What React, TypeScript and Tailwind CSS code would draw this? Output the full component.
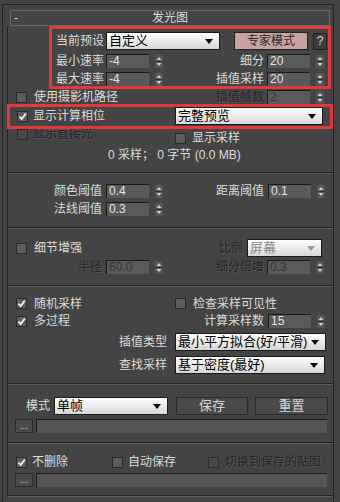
import React from "react";

const font = "font-['Liberation_Sans','Noto_Sans_CJK_SC',sans-serif]";
const dim = "text-[#262626] [text-shadow:1px_1px_0_#575757]";

function Arrows() {
  return (
    <svg width="8" height="13" viewBox="0 0 8 13" className="ml-[6px] shrink-0">
      <rect x="0" y="0" width="8" height="13" fill="#555" />
      <polygon points="1.5,5 4,2 6.5,5" fill="#d0d0d0" />
      <line x1="0.5" y1="6.5" x2="7.5" y2="6.5" stroke="#333" />
      <polygon points="1.5,8 4,11 6.5,8" fill="#d0d0d0" />
    </svg>
  );
}

function Spin({ value, disabled }: { value: string; disabled?: boolean }) {
  return (
    <div className="flex items-center shrink-0">
      <div
        className={`w-[43px] h-[14px] bg-[#5a5a5a] border-t border-l border-[#1a1a1a] pl-[2px] text-[12px] leading-[13px] ${
          disabled ? "text-[#363636]" : "text-[#e4e4e4]"
        }`}
      >
        {value}
      </div>
      <Arrows />
    </div>
  );
}

function Check({ checked, disabled }: { checked?: boolean; disabled?: boolean }) {
  return (
    <div
      className={`w-[11px] h-[11px] shrink-0 border border-[#2a2a2a] flex items-center justify-center ${
        disabled ? "bg-[#484848]" : "bg-[#5c5c5c]"
      }`}
    >
      {checked && (
        <svg width="9" height="9" viewBox="0 0 9 9">
          <polyline points="1.5,4.5 3.6,7 7.8,1.6" fill="none" stroke="#f2f2f2" strokeWidth="1.8" />
        </svg>
      )}
    </div>
  );
}

function Select({ value, className, disabled }: { value: string; className: string; disabled?: boolean }) {
  return (
    <div
      className={`h-[18px] shrink-0 flex items-center justify-between border border-[#1a1a1a] bg-gradient-to-b from-white to-[#d6d6d6] pl-[2px] pr-[6px] text-[13px] leading-[16px] ${
        disabled ? "text-[#8a8a8a]" : "text-black"
      } ${className}`}
    >
      <span>{value}</span>
      <svg width="8" height="5" viewBox="0 0 8 5">
        <polygon points="0,0 8,0 4,5" fill={disabled ? "#9a9a9a" : "#000"} />
      </svg>
    </div>
  );
}

function Btn({ children, className }: { children: React.ReactNode; className: string }) {
  return (
    <div
      className={`h-[18px] shrink-0 flex items-center justify-center border border-[#2a2a2a] bg-[#4a4a4a] text-[13px] text-[#d4d4d4] ${className}`}
    >
      {children}
    </div>
  );
}

function Sep() {
  return <div className="h-[2px] border-t border-[#222] border-b border-b-[#5c5c5c]" />;
}

function PathRow({ className }: { className: string }) {
  return (
    <div className={`flex items-center pl-[7px] ${className}`}>
      <div className="w-[18px] h-[14px] border border-[#2a2a2a] bg-[#4a4a4a] flex items-end justify-center text-[10px] leading-[10px] text-[#cfcfcf] pb-[1px]">
        ...
      </div>
      <div className="ml-[3px] w-[291px] h-[14px] bg-[#555] border-t border-l border-[#1a1a1a]" />
    </div>
  );
}

export default function App() {
  return (
    <div className={`relative w-[340px] h-[502px] overflow-hidden bg-[#444] pt-[4px] pl-[2px] text-[12px] text-[#dcdcdc] ${font}`}>
      <div className="w-[332px] h-full border-l border-t border-r border-[#222]">
        {/* rollout header */}
        <div className="ml-[7px] mt-[5px] w-[320px] h-[16px] border border-[#666] flex items-center relative">
          <span className="absolute left-[3px] top-[0px] text-[12px] leading-[14px]">-</span>
          <div className="w-full text-center text-[12px] leading-[14px]">发光图</div>
        </div>

        <div className="ml-[4px] border-l border-[#222]">
          {/* section 1 */}
          <div className="pt-[6px] pb-[10px]">
            <div className="flex items-center h-[18px]">
              <div className="w-[98px] pr-[2px] text-right">当前预设</div>
              <Select value="自定义" className="w-[114px]" />
              <div className="ml-[14px] w-[74px] h-[18px] flex items-center justify-center border border-[#222] bg-[#c9a3a3] text-[#2e2626]">
                专家模式
              </div>
              <div className="ml-[5px] w-[14px] h-[17px] flex items-center justify-center border border-[#222] bg-[#3e3e3e] text-[#d8d8d8]">
                ?
              </div>
            </div>
            <div className="flex items-center h-[18px] mt-[2px]">
              <div className="w-[98px] pr-[2px] text-right">最小速率</div>
              <Spin value="-4" />
              <div className="w-[104px] pr-[3px] text-right">细分</div>
              <Spin value="20" />
            </div>
            <div className="flex items-center h-[18px]">
              <div className="w-[98px] pr-[2px] text-right">最大速率</div>
              <Spin value="-4" />
              <div className="w-[104px] pr-[3px] text-right">插值采样</div>
              <Spin value="20" />
            </div>
            <div className="flex items-center h-[18px]">
              <div className="w-[155px] pl-[8px] flex items-center gap-[7px]">
                <Check />
                <span>使用摄影机路径</span>
              </div>
              <div className={`w-[104px] pr-[3px] text-right ${dim}`}>插值帧数</div>
              <Spin value="2" disabled />
            </div>
            <div className="flex items-center h-[20px]">
              <div className="w-[167px] pl-[9px] flex items-center gap-[5px]">
                <Check checked />
                <span>显示计算相位</span>
              </div>
              <Select value="完整预览" className="w-[148px]" />
            </div>
            <div className="flex items-start h-[22px]">
              <div className="w-[167px] pl-[9px] mt-[1px] h-[14px] flex items-center gap-[5px]">
                <Check disabled />
                <span className={dim}>显示直接光</span>
              </div>
              <div className="mt-[5px] h-[14px] flex items-center gap-[6px]">
                <Check />
                <span>显示采样</span>
              </div>
            </div>
            <div className="h-[14px] flex items-center pl-[100px]">0 采样； 0 字节 (0.0 MB)</div>
          </div>
          <Sep />

          {/* section 2 */}
          <div className="pt-[8px] pb-[9px]">
            <div className="flex items-center h-[18px]">
              <div className="w-[98px] pr-[4px] text-right">颜色阈值</div>
              <Spin value="0.4" />
              <div className="w-[105px] pr-[4px] text-right">距离阈值</div>
              <Spin value="0.1" />
            </div>
            <div className="flex items-center h-[18px]">
              <div className="w-[98px] pr-[4px] text-right">法线阈值</div>
              <Spin value="0.3" />
            </div>
          </div>
          <Sep />

          {/* section 3 */}
          <div className="pt-[10px] pb-[8px]">
            <div className="flex items-center h-[18px]">
              <div className="w-[167px] pl-[8px] flex items-center gap-[7px]">
                <Check />
                <span>细节增强</span>
              </div>
              <div className={`w-[72px] pr-[4px] text-right ${dim}`}>比例</div>
              <Select value="屏幕" className="w-[75px]" disabled />
            </div>
            <div className="flex items-center h-[20px]">
              <div className={`w-[98px] pr-[4px] text-right ${dim}`}>半径</div>
              <Spin value="60.0" disabled />
              <div className={`w-[104px] pr-[3px] text-right ${dim}`}>细分倍增</div>
              <Spin value="0.3" disabled />
            </div>
          </div>
          <Sep />

          {/* section 4 */}
          <div className="pt-[8px] pb-[9px]">
            <div className="flex items-center h-[17px]">
              <div className="w-[167px] pl-[8px] flex items-center gap-[7px]">
                <Check checked />
                <span>随机采样</span>
              </div>
              <div className="flex items-center gap-[7px]">
                <Check />
                <span>检查采样可见性</span>
              </div>
            </div>
            <div className="flex items-center h-[18px]">
              <div className="w-[155px] pl-[8px] flex items-center gap-[7px]">
                <Check checked />
                <span>多过程</span>
              </div>
              <div className="w-[105px] pr-[4px] text-right">计算采样数</div>
              <Spin value="15" />
            </div>
            <div className="flex items-center h-[18px] mt-[3px]">
              <div className="w-[167px] pr-[8px] text-right">插值类型</div>
              <Select value="最小平方拟合(好/平滑)" className="w-[151px]" />
            </div>
            <div className="flex items-center h-[18px] mt-[5px]">
              <div className="w-[167px] pr-[8px] text-right">查找采样</div>
              <Select value="基于密度(最好)" className="w-[150px]" />
            </div>
          </div>
          <Sep />

          {/* section 5 */}
          <div className="pt-[12px] pb-[9px]">
            <div className="flex items-center h-[18px]">
              <div className="w-[46px] pr-[4px] text-right">模式</div>
              <Select value="单帧" className="w-[114px]" />
              <Btn className="ml-[8px] w-[72px]">保存</Btn>
              <Btn className="ml-[7px] w-[73px]">重置</Btn>
            </div>
            <PathRow className="mt-[3px] h-[15px]" />
          </div>
          <Sep />

          {/* section 6 */}
          <div className="pt-[9px] pb-[8px]">
            <div className="flex items-center h-[18px]">
              <div className="w-[104px] pl-[8px] flex items-center gap-[5px]">
                <Check checked />
                <span>不删除</span>
              </div>
              <div className="w-[96px] flex items-center gap-[5px]">
                <Check />
                <span>自动保存</span>
              </div>
              <div className="flex items-center gap-[6px]">
                <Check disabled />
                <span className={dim}>切换到保存的贴图</span>
              </div>
            </div>
            <PathRow className="mt-[2px] h-[14px]" />
          </div>
          <Sep />
        </div>
      </div>

      {/* annotation boxes */}
      <div className="absolute left-[49px] top-[26px] w-[282px] h-[63px] border-[3px] border-[#e2383c]" />
      <div className="absolute left-[7px] top-[104px] w-[326px] h-[25px] border-[3px] border-[#e2383c]" />
    </div>
  );
}
